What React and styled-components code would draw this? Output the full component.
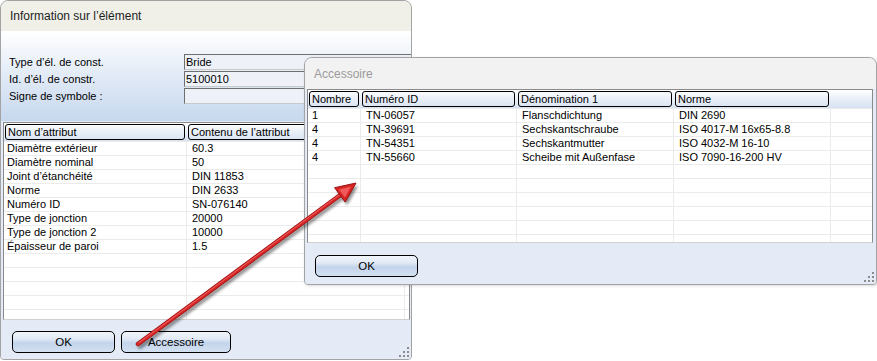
import React from "react";
import styled, { createGlobalStyle } from "styled-components";

const GlobalStyle = createGlobalStyle`
    html, body {
        margin: 0;
        padding: 0;
        background: #ffffff;
    }
    body {
        font-family: "Liberation Sans", Arial, sans-serif;
        font-size: 11px;
        color: #000;
    }
`;

const Desktop = styled.div`
    position: relative;
    width: 877px;
    height: 361px;
    overflow: hidden;
    background: #ffffff;
`;

const Window = styled.div`
    display: flex;
    flex-direction: column;
    box-sizing: border-box;
    width: ${props => props.width}px;
    height: ${props => props.height}px;
    border: 1px solid #a3a3a3;
    border-radius: 8px 8px 4px 4px;
    overflow: hidden;
    background: #e4ebf6;
`;

const FloatingWindow = styled(Window)`
    position: absolute;
    left: 304px;
    top: 57px;
    box-shadow: 1px 1px 3px rgba(0, 0, 0, 0.15);
`;

const TitleBar = styled.div`
    flex: 0 0 auto;
    height: ${props => props.height}px;
    display: flex;
    align-items: center;
    padding-left: 9px;
    font-size: 12px;
    color: ${props => props.inactive ? '#9b9b9b' : '#1e1e1e'};
    background: ${props => props.inactive ? '#f2f2f2' : '#f0f0e9'};
`;

const FieldsArea = styled.div`
    flex: 0 0 auto;
    height: 90px;
    box-sizing: border-box;
    padding: 23px 0 0 8px;
    background: linear-gradient(to bottom, #ffffff 0%, #e4ecf7 45%, #c6d8ee 100%);
`;

const FieldGrid = styled.div`
    display: grid;
    grid-template-columns: 175px 1fr;
    row-gap: 1px;
`;

const FieldLabel = styled.div`
    height: 16px;
    line-height: 16px;
`;

const FieldBox = styled.div`
    height: 16px;
    line-height: 15px;
    box-sizing: border-box;
    padding-left: 1px;
    margin-right: -2px;
    border: 1px solid #6f6f6f;
    border-bottom-color: #c9c9c9;
    border-right: none;
    background: #eef2f8;
`;

const Grid = styled.div`
    flex: 0 0 ${props => props.height}px;
    box-sizing: border-box;
    margin: ${props => props.inset};
    border: 1px solid #8a8a8a;
    border-bottom-color: #d0d0d0;
    background: #ffffff;
    overflow: hidden;
`;

const HeaderRow = styled.div`
    display: grid;
    grid-template-columns: ${props => props.columns};
    height: 17px;
    padding-top: 1px;
    background: linear-gradient(to bottom, #ffffff 0%, #e9eff8 50%, #d6e2f2 100%);
`;

const HeaderCell = styled.div`
    box-sizing: border-box;
    height: 16px;
    line-height: 14px;
    margin: 0 2px 0 1px;
    padding-left: 2px;
    border: 1px solid #000;
    border-radius: 3px;
    white-space: nowrap;
    overflow: hidden;
`;

const EmptyHeader = styled.div``;

const Row = styled.div`
    display: grid;
    grid-template-columns: ${props => props.columns};
    box-sizing: border-box;
    height: 14px;
    border-top: 1px solid #ebebeb;
`;

const Cell = styled.div`
    line-height: 13px;
    padding-left: ${props => props.pad}px;
    border-right: 1px solid #ebebeb;
    white-space: nowrap;
    overflow: hidden;
    &:last-child {
        border-right: none;
    }
`;

const ButtonBar = styled.div`
    flex: 1 1 auto;
    display: flex;
    align-items: flex-start;
    gap: 6px;
    padding: ${props => props.pad};
    position: relative;
    background: #e4ebf6;
`;

const Button = styled.button`
    box-sizing: border-box;
    width: ${props => props.width}px;
    height: 22px;
    border: 1px solid #000;
    border-radius: 5px;
    font-family: "Liberation Sans", Arial, sans-serif;
    font-size: 11.5px;
    color: #000;
    padding: 0;
    background: linear-gradient(to bottom, #f2f5fb 0%, #e1e9f5 35%, #c3d4eb 55%, #d3e0f1 100%);
`;

const Grip = styled.svg`
    position: absolute;
    right: 1px;
    bottom: 1px;
`;

const Overlay = styled.svg`
    position: absolute;
    left: 0;
    top: 0;
    pointer-events: none;
`;

const attributes = [
    ["Diamètre extérieur", "60.3"],
    ["Diamètre nominal", "50"],
    ["Joint d’étanchéité", "DIN 11853"],
    ["Norme", "DIN 2633"],
    ["Numéro ID", "SN-076140"],
    ["Type de jonction", "20000"],
    ["Type de jonction 2", "10000"],
    ["Épaisseur de paroi", "1.5"],
];

const accessories = [
    ["1", "TN-06057", "Flanschdichtung", "DIN 2690"],
    ["4", "TN-39691", "Sechskantschraube", "ISO 4017-M 16x65-8.8"],
    ["4", "TN-54351", "Sechskantmutter", "ISO 4032-M 16-10"],
    ["4", "TN-55660", "Scheibe mit Außenfase", "ISO 7090-16-200 HV"],
];

const infoColumns = "183px 218px 1fr";
const accColumns = "53px 156px 157px 157px 1fr";

function ResizeGrip() {
    const dots = [[8, 0], [4, 4], [8, 4], [0, 8], [4, 8], [8, 8]];
    return (
        <Grip width="11" height="11" viewBox="0 0 11 11">
            {dots.map(([x, y]) => (
                <rect key={`${x}-${y}`} x={x} y={y} width="2" height="2" fill="#8c8c8c" />
            ))}
        </Grip>
    );
}

function padRows(rows, total, width) {
    const out = rows.slice();
    while (out.length < total) out.push(Array(width).fill(""));
    return out;
}

function Arrow() {
    return (
        <Overlay width="877" height="361" viewBox="0 0 877 361">
            <defs>
                <filter id="soft" x="-20%" y="-20%" width="140%" height="140%">
                    <feGaussianBlur stdDeviation="1.6" />
                </filter>
            </defs>
            <g filter="url(#soft)" opacity="0.45" transform="translate(2 3)">
                <line x1="138" y1="344" x2="340" y2="195" stroke="#000" strokeWidth="4" strokeLinecap="round" />
                <polygon points="356,183 334.6,187.7 345.2,202.1" fill="#000" />
            </g>
            <line x1="138" y1="344" x2="341" y2="194.5" stroke="#9c1212" strokeWidth="4.5" strokeLinecap="round" />
            <line x1="138" y1="344" x2="341" y2="194.5" stroke="#d92626" strokeWidth="3" strokeLinecap="round" />
            <line x1="139" y1="342.6" x2="340" y2="194.3" stroke="#ee6a6a" strokeWidth="0.9" strokeLinecap="round" />
            <polygon points="356,183 334.6,187.7 345.2,202.1" fill="#d92424" stroke="#9c1212" strokeWidth="1" strokeLinejoin="round" />
            <polygon points="351,186.5 339,189.5 345,197.5" fill="#ef5a5a" />
        </Overlay>
    );
}

export default function App() {
    return (
        <>
            <GlobalStyle />
            <Desktop>
                <Window width={412} height={360}>
                    <TitleBar height={30}>Information sur l’élément</TitleBar>
                    <FieldsArea>
                        <FieldGrid>
                            <FieldLabel>Type d’él. de const.</FieldLabel>
                            <FieldBox>Bride</FieldBox>
                            <FieldLabel>Id. d’él. de constr.</FieldLabel>
                            <FieldBox>5100010</FieldBox>
                            <FieldLabel>Signe de symbole :</FieldLabel>
                            <FieldBox />
                        </FieldGrid>
                    </FieldsArea>
                    <Grid height={198} inset="1px 1px 0 2px">
                        <HeaderRow columns={infoColumns}>
                            <HeaderCell>Nom d’attribut</HeaderCell>
                            <HeaderCell>Contenu de l’attribut</HeaderCell>
                            <EmptyHeader />
                        </HeaderRow>
                        {padRows(attributes, 14, 2).map((row, i) => (
                            <Row key={i} columns={infoColumns}>
                                <Cell pad={3}>{row[0]}</Cell>
                                <Cell pad={5}>{row[1]}</Cell>
                                <Cell pad={0} />
                            </Row>
                        ))}
                    </Grid>
                    <ButtonBar pad="11px 0 0 11px">
                        <Button width={103}>OK</Button>
                        <Button width={110}>Accessoire</Button>
                        <ResizeGrip />
                    </ButtonBar>
                </Window>

                <FloatingWindow width={573} height={228}>
                    <TitleBar height={31} inactive>Accessoire</TitleBar>
                    <Grid height={154} inset="0 3px 0 2px">
                        <HeaderRow columns={accColumns}>
                            <HeaderCell>Nombre</HeaderCell>
                            <HeaderCell>Numéro ID</HeaderCell>
                            <HeaderCell>Dénomination 1</HeaderCell>
                            <HeaderCell>Norme</HeaderCell>
                            <EmptyHeader />
                        </HeaderRow>
                        {padRows(accessories, 11, 4).map((row, i) => (
                            <Row key={i} columns={accColumns}>
                                <Cell pad={4}>{row[0]}</Cell>
                                <Cell pad={5}>{row[1]}</Cell>
                                <Cell pad={5}>{row[2]}</Cell>
                                <Cell pad={5}>{row[3]}</Cell>
                                <Cell pad={0} />
                            </Row>
                        ))}
                    </Grid>
                    <ButtonBar pad="12px 0 0 10px">
                        <Button width={103}>OK</Button>
                        <ResizeGrip />
                    </ButtonBar>
                </FloatingWindow>

                <Arrow />
            </Desktop>
        </>
    );
}
